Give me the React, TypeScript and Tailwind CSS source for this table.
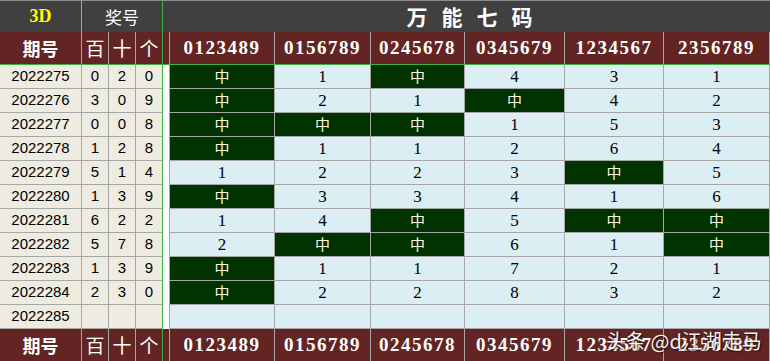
const cjk = "font-['Noto_Sans_CJK_SC',sans-serif]";
const serif = "font-['Liberation_Serif','Noto_Sans_CJK_SC',serif]";

const cols = [
  { label: "0123489", w: "w-[105px]" },
  { label: "0156789", w: "w-[96px]" },
  { label: "0245678", w: "w-[94px]" },
  { label: "0345679", w: "w-[100px]" },
  { label: "1234567", w: "w-[99px]" },
  { label: "2356789", w: "w-[106px]" },
];

const rows = [
  { qh: "2022275", nums: ["0", "2", "0"], cells: ["中", "1", "中", "4", "3", "1"] },
  { qh: "2022276", nums: ["3", "0", "9"], cells: ["中", "2", "1", "中", "4", "2"] },
  { qh: "2022277", nums: ["0", "0", "8"], cells: ["中", "中", "中", "1", "5", "3"] },
  { qh: "2022278", nums: ["1", "2", "8"], cells: ["中", "1", "1", "2", "6", "4"] },
  { qh: "2022279", nums: ["5", "1", "4"], cells: ["1", "2", "2", "3", "中", "5"] },
  { qh: "2022280", nums: ["1", "3", "9"], cells: ["中", "3", "3", "4", "1", "6"] },
  { qh: "2022281", nums: ["6", "2", "2"], cells: ["1", "4", "中", "5", "中", "中"] },
  { qh: "2022282", nums: ["5", "7", "8"], cells: ["2", "中", "中", "6", "1", "中"] },
  { qh: "2022283", nums: ["1", "3", "9"], cells: ["中", "1", "1", "7", "2", "1"] },
  { qh: "2022284", nums: ["2", "3", "0"], cells: ["中", "2", "2", "8", "3", "2"] },
  { qh: "2022285", nums: ["", "", ""], cells: ["", "", "", "", "", ""] },
];

function HeaderRow({ bottom }: { bottom?: boolean }) {
  const line = bottom ? "border-b-0" : "border-b border-b-[#3cb043]";
  return (
    <div className={`flex ${bottom ? "h-[32px]" : "h-[33px]"} bg-[#632523] text-white`}>
      <div className={`w-[82px] flex items-center justify-center border-r border-[#a6a6a6] ${line} ${cjk} text-[18px] font-bold`}>
        期号
      </div>
      {["百", "十", "个"].map((t, i) => (
        <div
          key={t}
          className={`w-[27px] flex items-center justify-center border-r ${
            i === 2 ? "border-r-[#3cb043]" : "border-r-[#a6a6a6]"
          } ${line} ${cjk} text-[19px]`}
        >
          {t}
        </div>
      ))}
      <div className={`w-[7px] border-r border-r-[#a6a6a6] ${line}`} />
      {cols.map((c) => (
        <div
          key={c.label}
          className={`${c.w} flex items-center justify-center border-r border-r-[#a6a6a6] ${line} ${serif} text-[19px] font-bold tracking-[1.5px]`}
        >
          {c.label}
        </div>
      ))}
    </div>
  );
}

export default function App() {
  return (
    <div className="relative w-[770px] h-[361px] overflow-hidden bg-white">
      {/* title row */}
      <div className="flex h-[32px] bg-[#404040] border-t border-[#8c8c8c]">
        <div className={`w-[82px] flex items-center justify-center border-r border-[#a6a6a6] ${serif} text-[18px] font-bold text-[#ffff00]`}>
          3D
        </div>
        <div className={`w-[81px] flex items-center justify-center border-r border-[#3cb043] ${cjk} text-[17px] text-white`}>
          奖号
        </div>
        <div className={`flex-1 flex items-center justify-center pl-[20px] ${cjk} text-[21px] font-bold tracking-[14px] text-white`}>
          万能七码
        </div>
      </div>

      <HeaderRow />

      {rows.map((r) => (
        <div key={r.qh} className="flex h-[24px] text-black">
          <div className="w-[82px] flex items-center justify-center bg-[#eeece1] border-r border-b border-[#a6a6a6] font-['Liberation_Sans',sans-serif] text-[15px]">
            {r.qh}
          </div>
          {r.nums.map((n, i) => (
            <div
              key={i}
              className={`w-[27px] flex items-center justify-center bg-[#eeece1] border-r border-b border-[#a6a6a6] ${
                i === 2 ? "border-r-[#3cb043]" : ""
              } font-['Liberation_Sans',sans-serif] text-[15px]`}
            >
              {n}
            </div>
          ))}
          <div className="w-[7px] bg-white border-r border-[#a6a6a6]" />
          {r.cells.map((v, i) =>
            v === "中" ? (
              <div
                key={i}
                className={`${cols[i].w} flex items-center justify-center bg-[#003300] border-r border-b border-[#a6a6a6] ${cjk} text-[15px] text-[#fffbe0]`}
              >
                中
              </div>
            ) : (
              <div
                key={i}
                className={`${cols[i].w} flex items-center justify-center bg-[#daeef3] border-r border-b border-[#a6a6a6] ${serif} text-[17px]`}
              >
                {v}
              </div>
            )
          )}
        </div>
      ))}

      <HeaderRow bottom />

      {/* watermark */}
      <div className={`absolute left-[606px] top-[326px] ${cjk} text-[20px] text-white/95 [text-shadow:1px_1px_2px_rgba(0,0,0,0.8)] whitespace-nowrap`}>
        头条 @d江湖走马
      </div>
    </div>
  );
}
